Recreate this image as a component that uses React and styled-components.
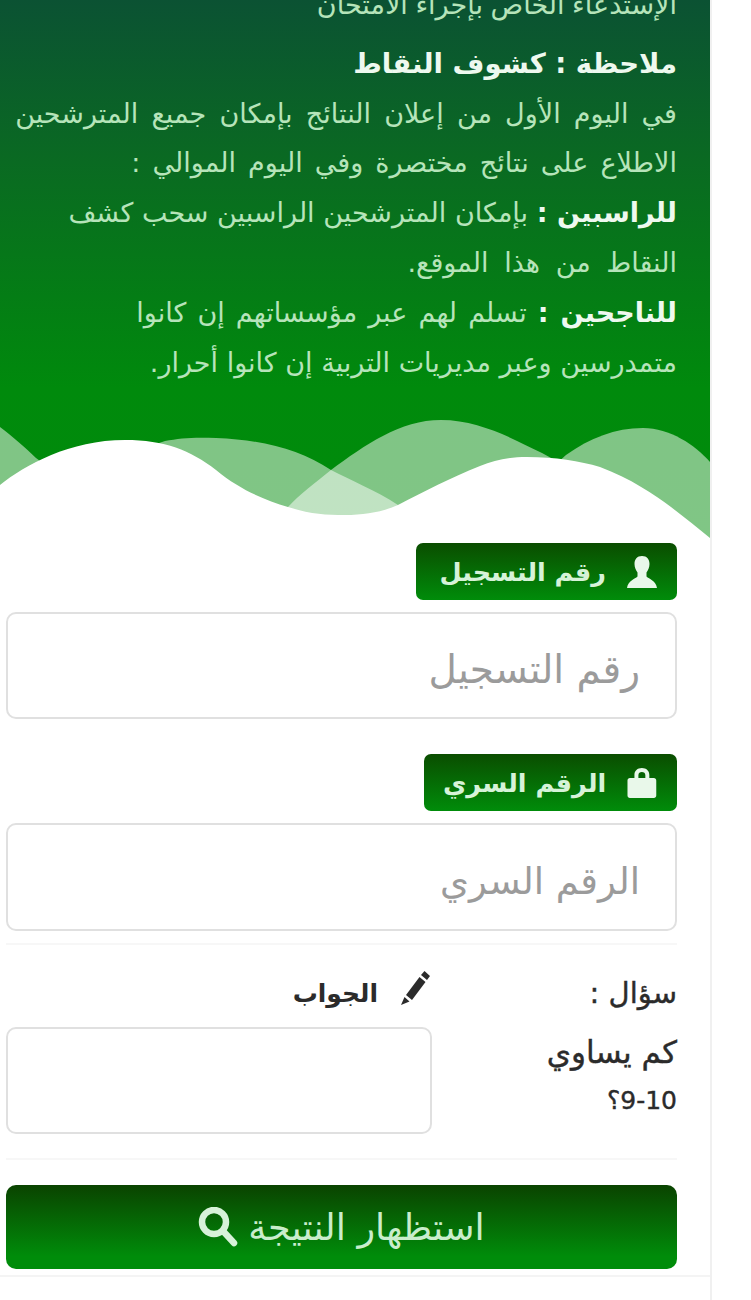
import React from "react";
import styled, { createGlobalStyle } from "styled-components";

const Global = createGlobalStyle`
  html, body { margin: 0; padding: 0; background: #fff; height: 1300px; overflow: hidden; }
  body { font-family: "DejaVu Sans", "Noto Sans", sans-serif; }
  * { box-sizing: border-box; }
`;

const Panel = styled.main`
  width: 712px;
  height: 1300px;
  overflow: hidden;
  border-right: 2px solid #f0f0f0;
  direction: rtl;
`;

const Hero = styled.section`
  position: relative;
  height: 540px;
  padding: 0 33px 0 8px;
  overflow: hidden;
  color: #b6e4ba;
  font-size: 27px;
  line-height: 49.8px;
  background: linear-gradient(180deg, #0b5233 0%, #0a6a22 30%, #008a0c 72%, #008c0a 100%);
`;

const Clipped = styled.p`
  margin: -20px 0 9px;
  word-spacing: -1px;
`;

const Heading = styled.h2`
  margin: 0;
  font-size: 27.500px;
  line-height: 49.8px;
  font-weight: 700;
  color: #eef9ef;
`;

const Line = styled.p`
  margin: 0;
  white-space: nowrap;
  word-spacing: ${(p) => p.$ws || 0}px;
`;

const Strong = styled.b`
  color: #eef9ef;
`;

const Wave = styled.svg`
  position: absolute;
  left: 0;
  bottom: 0;
  width: 710px;
  height: 140px;
  display: block;
`;

const Form = styled.form`
  padding: 3px 33px 0 6px;
  display: flex;
  flex-direction: column;
  align-items: stretch;
`;

const Badge = styled.label`
  align-self: flex-start;
  height: 57px;
  width: ${(p) => p.$w}px;
  display: flex;
  align-items: center;
  gap: 20px;
  padding: 0 19px;
  border-radius: 7px;
  color: #d6f3d8;
  font-size: 25.500px;
  font-weight: 700;
  white-space: nowrap;
  background: linear-gradient(180deg, #0a4d00 0%, #008c0a 100%);
`;

const Field = styled.div`
  height: ${(p) => p.$h}px;
  margin-top: 12px;
  margin-bottom: ${(p) => p.$mb}px;
  padding: 8px 35px 0;
  display: flex;
  align-items: center;
  border: 2px solid #e0e0e0;
  border-radius: 10px;
  background: #fff;
  color: #9b9b9b;
  font-size: ${(p) => p.$fs || 38}px;
  white-space: nowrap;
`;

const Rule = styled.hr`
  margin: ${(p) => p.$mt || 0}px 0 0;
  border: 0;
  border-top: 2px solid #f7f7f7;
  height: 0;
`;

const QuestionRow = styled.div`
  display: grid;
  grid-template-columns: 1fr 426px;
  margin-top: 26px;
  color: #2b2b2b;
  font-size: 25px;
`;

const Question = styled.div`
  line-height: 46px;
  -webkit-text-stroke: 0.4px #2b2b2b;
`;

const QuestionTitle = styled.div`
  height: 58px;
  line-height: 44px;
  font-size: 29px;
`;

const QuestionText = styled.div`
  width: 160px;
  line-height: 46px;
  font-size: 31px;
`;

const Num = styled.span`
  font-size: 25px;
`;

const Answer = styled.div`
  display: flex;
  flex-direction: column;
`;

const AnswerLabel = styled.label`
  height: 44px;
  display: flex;
  align-items: center;
  gap: 22px;
  font-weight: 700;
`;

const PencilSvg = styled.svg`
  margin-top: -10px;
`;

const Submit = styled.button`
  height: 84px;
  margin-top: 25px;
  border: 0;
  border-radius: 10px;
  direction: rtl;
  display: flex;
  align-items: center;
  justify-content: center;
  gap: 10px;
  color: #c9edcc;
  font: 400 36.500px "DejaVu Sans", sans-serif;
  background: linear-gradient(180deg, #0a4300 0%, #008c0a 85%);
`;

const BottomRule = styled.hr`
  margin: 6px -33px 0 -6px;
  border: 0;
  border-top: 2px solid #f4f4f4;
  height: 0;
`;

const UserIcon = () => (
  <svg width="32" height="34" viewBox="0 0 32 34" fill="#e9f8ea">
    <path d="M16 1c-5 0-7.500 3.500-7.500 8 0 3.500 1.500 6.500 3 8.500v4C9 24 2 25.500 1 33h30c-1-7.500-8-9-10.500-11.500v-4c1.500-2 3-5 3-8.500 0-4.500-2.500-8-7.500-8z" />
  </svg>
);

const LockIcon = () => (
  <svg width="32" height="32" viewBox="0 0 32 32" fill="#e9f8ea">
    <path fillRule="evenodd" d="M16 1c-4.500 0-7.500 2.800-7.500 7v3H4c-1.500 0-2.500 1-2.500 2.500v15C1.500 30 2.500 31 4 31h24c1.500 0 2.500-1 2.500-2.500v-15c0-1.500-1-2.500-2.500-2.500h-4.500V8c0-4.200-3-7-7.500-7zm0 4c2 0 3.500 1.200 3.500 3.200V11h-7V8.200C12.500 6.200 14 5 16 5z" />
  </svg>
);

const PencilIcon = () => (
  <PencilSvg width="32" height="36" viewBox="0 0 32 36" fill="#2b2b2b">
    <path d="M24.500 1l5.500 5-3 4-6-5zM19.500 7l6 5L12 30l-6-5zM4.500 27l5 4.500L1 35z" />
  </PencilSvg>
);

const SearchIcon = () => (
  <svg width="40" height="40" viewBox="0 0 40 40" fill="none" stroke="#d7f2d9" strokeWidth="6.500" strokeLinecap="round">
    <circle cx="16" cy="15" r="12" />
    <path d="M25 24l11 12" />
  </svg>
);

export default function App() {
  return (
    <>
      <Global />
      <Panel>
        <Hero>
          <Clipped>الإستدعاء الخاص بإجراء الامتحان</Clipped>
          <Heading>ملاحظة : كشوف النقاط</Heading>
          <Line $ws={4.6}>في اليوم الأول من إعلان النتائج بإمكان جميع المترشحين</Line>
          <Line $ws={3.5}>الاطلاع على نتائج مختصرة وفي اليوم الموالي :</Line>
          <Line><Strong>للراسبين :</Strong> بإمكان المترشحين الراسبين سحب كشف</Line>
          <Line $ws={7}>النقاط من هذا الموقع.</Line>
          <Line $ws={2.5}><Strong>للناجحين :</Strong> تسلم لهم عبر مؤسساتهم إن كانوا</Line>
          <Line>متمدرسين وعبر مديريات التربية إن كانوا أحرار.</Line>
          <Wave viewBox="0 400 710 140" preserveAspectRatio="none">
            <path fill="#fff" fillOpacity="0.5" d="M0 427C12 436 26 448 36 458L120 520H420L398 505C375 490 350 480 331 470C300 450 265 440 216 438C195 437 180 438 165 441L80 470L0 500Z" />
            <path fill="#fff" fillOpacity="0.5" d="M260 530L288 507C300 494 315 483 331 470C365 445 400 420 441 420C480 420 515 440 542 453C565 465 590 480 610 500V530Z" />
            <path fill="#fff" fillOpacity="0.5" d="M540 480C550 470 558 462 566 455C590 438 615 428 643 428C670 428 695 445 710 462V540H560Z" />
            <path fill="#fff" d="M0 485C25 465 70 440 125 440C165 440 190 450 216 470C240 490 265 500 288 507C310 514 325 515 345 515C365 515 382 512 398 505C425 491 450 478 480 466C495 460 510 457 527 457C555 457 580 461 600 467C630 478 655 495 671 507C685 518 698 528 710 538V540H0Z" />
          </Wave>
        </Hero>
        <Form>
          <Badge $w={261}>
            <UserIcon />
            رقم التسجيل
          </Badge>
          <Field $h={107} $mb={35} $fs={39}>رقم التسجيل</Field>
          <Badge $w={253}>
            <LockIcon />
            الرقم السري
          </Badge>
          <Field $h={108} $mb={12} $fs={37}>الرقم السري</Field>
          <Rule />
          <QuestionRow>
            <Question>
              <QuestionTitle>سؤال :</QuestionTitle>
              <QuestionText>كم يساوي <Num>10-9؟</Num></QuestionText>
            </Question>
            <Answer>
              <AnswerLabel>
                <PencilIcon />
                الجواب
              </AnswerLabel>
              <Field $h={107} $mb={0} />
            </Answer>
          </QuestionRow>
          <Rule $mt={24} />
          <Submit type="button">
            استظهار النتيجة
            <SearchIcon />
          </Submit>
          <BottomRule />
        </Form>
      </Panel>
    </>
  );
}
